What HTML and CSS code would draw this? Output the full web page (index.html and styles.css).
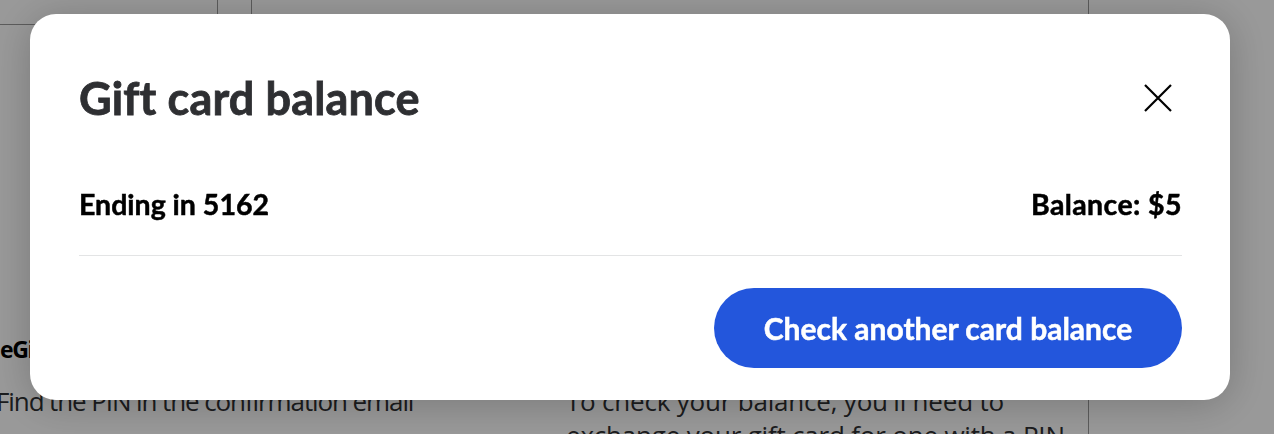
FILE: index.html
```html
<!DOCTYPE html>
<html lang="en">
<head>
<meta charset="utf-8">
<title>Gift card balance</title>
<link rel="stylesheet" href="styles.css">
</head>
<body>
<div class="page">
  <div class="main-col">
    <div class="tabs">
      <div class="tab tab-first"></div>
      <div class="tab tab-second"></div>
      <div class="tab tab-rest"></div>
    </div>
    <div class="content">
      <div class="content-left">
        <h3 class="content-heading">eGift cards</h3>
        <p class="content-text tight">Find the PIN in the confirmation email</p>
      </div>
      <div class="content-right">
        <p class="content-text narrow">To check your balance, you'll need to exchange your gift card for one with a PIN</p>
      </div>
    </div>
  </div>
  <div class="side-col"></div>
</div>

<div class="overlay"></div>

<div class="modal" role="dialog" aria-labelledby="modal-title">
  <div class="modal-header">
    <h2 class="modal-title" id="modal-title">Gift card balance</h2>
    <button class="close-btn" aria-label="Close">
      <svg width="28" height="28" viewBox="0 0 28 28" aria-hidden="true">
        <path d="M1 1 L27 27 M27 1 L1 27" stroke="#000" stroke-width="2.2" fill="none"/>
      </svg>
    </button>
  </div>
  <div class="summary">
    <span class="summary-label">Ending in 5162</span>
    <span class="summary-label wide">Balance: $5</span>
  </div>
  <div class="modal-footer">
    <button class="primary-btn">Check another card balance</button>
  </div>
</div>
</body>
</html>
```

FILE: styles.css
```css
html, body {
  margin: 0;
  padding: 0;
  height: 100%;
  overflow: hidden;
}

body {
  background: #ffffff;
  font-family: "Open Sans", "Liberation Sans", sans-serif;
  color: #2e2f32;
}

/* ---------- page underneath ---------- */
.page {
  display: grid;
  grid-template-columns: 1088px 1fr;
  height: 100%;
}

.main-col {
  display: flex;
  flex-direction: column;
}

.side-col {
  border-left: 1px solid #999999;
}

.tabs {
  display: flex;
  height: 60px;
}

.tab-first {
  width: 218px;
  height: 25px;
  box-sizing: border-box;
  border-bottom: 1px solid #999999;
  border-right: 1px solid #999999;
}

.tab-second {
  width: 34px;
  box-sizing: border-box;
  border-right: 1px solid #999999;
}

.tab-rest {
  flex: 1;
}

.content {
  display: grid;
  grid-template-columns: 566px 1fr;
  margin-top: 274px;
}

.content-left {
  margin-left: -4px;
}

.content-heading {
  margin: 0 0 20px;
  padding-left: 4px;
  font-size: 23px;
  font-weight: 700;
  line-height: 30px;
  letter-spacing: -1.4px;
  color: #000;
}

.content-text {
  margin: 0;
  font-size: 26px;
  line-height: 34px;
  letter-spacing: -0.2px;
  color: #2e2f32;
}

.tight {
  letter-spacing: -1.1px;
}

.content-right {
  padding-top: 50px;
}

.narrow {
  width: 520px;
}

/* ---------- overlay ---------- */
.overlay {
  position: fixed;
  inset: 0;
  background: rgba(0, 0, 0, 0.4);
}

/* ---------- modal ---------- */
.modal {
  position: fixed;
  left: 30px;
  top: 14px;
  width: 1200px;
  height: 386px;
  box-sizing: border-box;
  padding: 56px 48px 32px 49px;
  background: #ffffff;
  border-radius: 26px;
  box-shadow: 0 4px 40px rgba(0, 0, 0, 0.22);
  display: flex;
  flex-direction: column;
  font-family: "Lato", "Noto Sans", sans-serif;
}

.modal-header {
  display: flex;
  align-items: center;
  justify-content: space-between;
  height: 56px;
}

.modal-title {
  margin: 0;
  font-size: 45px;
  font-weight: 700;
  line-height: 56px;
  letter-spacing: 0.15px;
  color: #2e2f32;
  -webkit-text-stroke: 0.8px #2e2f32;
}

.close-btn {
  width: 28px;
  height: 28px;
  margin-right: 10px;
  padding: 0;
  border: 0;
  background: none;
  display: flex;
}

.summary {
  display: flex;
  justify-content: space-between;
  align-items: center;
  height: 40px;
  padding: 58px 0 31px;
  border-bottom: 1px solid #e3e4e5;
}

.summary-label {
  font-size: 28.5px;
  font-weight: 700;
  color: #000;
  -webkit-text-stroke: 0.5px #000;
}

.wide {
  letter-spacing: 0.4px;
}

.modal-footer {
  display: flex;
  justify-content: flex-end;
  margin-top: 32px;
}

.primary-btn {
  width: 468px;
  height: 80px;
  border: 0;
  border-radius: 40px;
  background: #2356dc;
  color: #ffffff;
  font-family: "Lato", "Noto Sans", sans-serif;
  font-size: 30px;
  font-weight: 700;
  -webkit-text-stroke: 0.5px #ffffff;
}
```
